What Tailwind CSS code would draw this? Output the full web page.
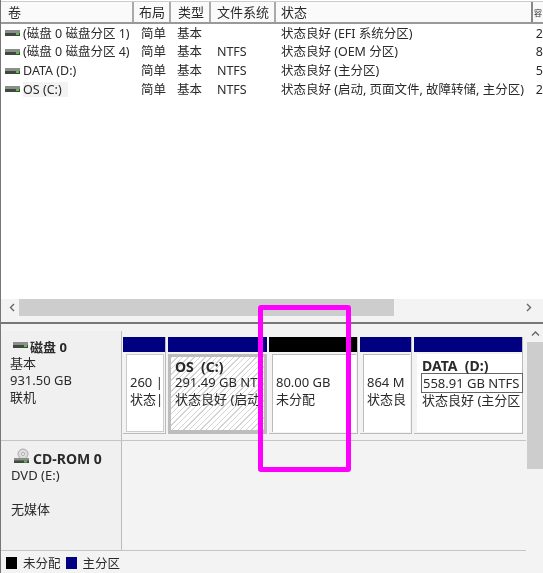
<!doctype html>
<html lang="zh-CN">
<head>
  <meta charset="UTF-8" />
  <title>磁盘管理</title>
  <script src="https://cdn.jsdelivr.net/npm/@tailwindcss/browser@4"></script>
</head>
<body class="bg-white">
<div class="relative w-[543px] h-[573px] overflow-hidden flex flex-col bg-white text-[13px] leading-[15px] text-[#2a2a2a] blur-[0.35px] font-['Noto_Sans','Noto_Sans_CJK_SC',sans-serif]">

  <!-- volume list -->
  <div class="h-[299px] border-l border-[#777] flex flex-col shrink-0">
    <div class="h-[23px] mt-px flex border-b-2 border-[#999] border-t border-t-[#ccc] bg-[#fafafa] shrink-0">
      <div class="w-[133px] pl-[7px] pt-[3px] border-r-2 border-[#aaa]">卷</div>
      <div class="w-[37px] pl-[5px] pt-[3px] border-r-2 border-[#aaa]">布局</div>
      <div class="w-[40px] pl-[7px] pt-[3px] border-r-2 border-[#aaa]">类型</div>
      <div class="w-[65px] pl-[6px] pt-[3px] border-r-2 border-[#aaa]">文件系统</div>
      <div class="w-[257px] pl-[5px] pt-[3px] border-r-2 border-[#888]">状态</div>
      <div class="w-[8px] pl-[1px] pt-[3px] text-[8px]">容</div>
    </div>
    <div class="text-[12.5px]">
      <div class="h-[18.67px] flex items-center">
        <div class="w-[133px] pl-[4px] flex items-center gap-[3px]"><svg width="15" height="6" viewBox="0 0 15 6"><rect width="15" height="6" fill="#8a8f8a"/><rect y="3" width="15" height="3" fill="#3d4a3d"/><rect x="11" y="3" width="3" height="2" fill="#5fbf4a"/></svg><span>(磁盘 0 磁盘分区 1)</span></div>
        <div class="w-[37px] pl-[7px]">简单</div><div class="w-[40px] pl-[6px]">基本</div><div class="w-[65px] pl-[6px]"></div>
        <div class="w-[257px] pl-[5px] whitespace-nowrap">状态良好 (EFI 系统分区)</div><div class="pl-[3px]">2</div>
      </div>
      <div class="h-[18.67px] flex items-center">
        <div class="w-[133px] pl-[4px] flex items-center gap-[3px]"><svg width="15" height="6" viewBox="0 0 15 6"><rect width="15" height="6" fill="#8a8f8a"/><rect y="3" width="15" height="3" fill="#3d4a3d"/><rect x="11" y="3" width="3" height="2" fill="#5fbf4a"/></svg><span>(磁盘 0 磁盘分区 4)</span></div>
        <div class="w-[37px] pl-[7px]">简单</div><div class="w-[40px] pl-[6px]">基本</div><div class="w-[65px] pl-[6px]">NTFS</div>
        <div class="w-[257px] pl-[5px] whitespace-nowrap">状态良好 (OEM 分区)</div><div class="pl-[3px]">8</div>
      </div>
      <div class="h-[18.67px] flex items-center">
        <div class="w-[133px] pl-[4px] flex items-center gap-[3px]"><svg width="15" height="6" viewBox="0 0 15 6"><rect width="15" height="6" fill="#8a8f8a"/><rect y="3" width="15" height="3" fill="#3d4a3d"/><rect x="11" y="3" width="3" height="2" fill="#5fbf4a"/></svg><span>DATA (D:)</span></div>
        <div class="w-[37px] pl-[7px]">简单</div><div class="w-[40px] pl-[6px]">基本</div><div class="w-[65px] pl-[6px]">NTFS</div>
        <div class="w-[257px] pl-[5px] whitespace-nowrap">状态良好 (主分区)</div><div class="pl-[3px]">5</div>
      </div>
      <div class="h-[18.67px] flex items-center">
        <div class="w-[133px] pl-[4px] flex items-center gap-[3px]"><svg width="15" height="6" viewBox="0 0 15 6"><rect width="15" height="6" fill="#8a8f8a"/><rect y="3" width="15" height="3" fill="#3d4a3d"/><rect x="11" y="3" width="3" height="2" fill="#5fbf4a"/></svg><span class="bg-[#f3f3f3] pr-[6px]">OS (C:)</span></div>
        <div class="w-[37px] pl-[7px]">简单</div><div class="w-[40px] pl-[6px]">基本</div><div class="w-[65px] pl-[6px]">NTFS</div>
        <div class="w-[257px] pl-[5px] whitespace-nowrap">状态良好 (启动, 页面文件, 故障转储, 主分区)</div><div class="pl-[3px]">2</div>
      </div>
    </div>
  </div>

  <!-- horizontal scrollbar -->
  <div class="h-[25px] shrink-0 border-l border-[#777] bg-[#f3f3f3] border-b-2 border-b-[#777]">
    <div class="h-[17px] flex items-center">
      <svg class="ml-[5px] w-[13px] shrink-0" width="7" height="9" viewBox="0 0 7 9"><path d="M5 1 1.5 4.5 5 8" fill="none" stroke="#666" stroke-width="1.4"/></svg>
      <div class="w-[375px] h-[17px] bg-[#cdcdcd]"></div>
      <svg class="ml-[131px]" width="7" height="9" viewBox="0 0 7 9"><path d="M2 1 5.5 4.5 2 8" fill="none" stroke="#666" stroke-width="1.4"/></svg>
    </div>
  </div>

  <!-- disk area -->
  <div class="flex-1 flex bg-[#f3f3f3] border-l border-[#777] min-h-0">
    <div class="w-[525px] shrink-0 flex flex-col pt-[7px]">

      <!-- disk 0 -->
      <div class="h-[110px] flex shrink-0 border-b border-[#c4c4c4]">
        <div class="w-[121px] shrink-0 bg-[#f0f0f0] border-r border-[#bbb] pl-[9px] pt-[8px]">
          <div class="flex items-center h-[16px] ml-[3px]">
            <svg class="-mt-[4px] mr-[2px]" width="15" height="6" viewBox="0 0 15 6"><rect width="15" height="6" fill="#8a8f8a"/><rect y="3" width="15" height="3" fill="#3d4a3d"/><rect x="11" y="3" width="3" height="2" fill="#5fbf4a"/></svg>
            <span class="font-bold">磁盘 0</span>
          </div>
          <div class="leading-[17px]">基本<br />931.50 GB<br />联机</div>
        </div>
        <div class="flex-1 flex pl-[1px] pt-[6px] gap-[2px] items-start">
          <div class="w-[43px] h-[97px] border-r border-b border-[#bbb] flex flex-col">
            <div class="h-[15px] bg-[#000080] shrink-0"></div>
            <div class="mt-[2px] ml-[3px] mr-[1px] h-[78px] bg-white border border-[#ccc] pl-[3px] pt-[19px] leading-[17px] whitespace-nowrap">260 |<br />状态|</div>
          </div>
          <div class="w-[99px] h-[97px] border-b border-[#bbb] flex flex-col">
            <div class="h-[15px] bg-[#000080] shrink-0"></div>
            <div class="mt-[2px] h-[80px] bg-[repeating-linear-gradient(135deg,#d4d4d4_0,#d4d4d4_1px,#fff_1px,#fff_4px)] border-[3px] border-[#bdbdbd] pl-[4px] pt-[2px] leading-[17px] whitespace-nowrap"><b class="block text-[14px] h-[15px] leading-[15px]">OS&nbsp; (C:)</b>291.49 GB NT<br />状态良好 (启动</div>
          </div>
          <div class="w-[89px] h-[97px] border-b border-r border-[#bbb] flex flex-col">
            <div class="h-[15px] bg-black shrink-0"></div>
            <div class="mt-[2px] ml-[3px] mr-[1px] h-[78px] bg-white border-l border-t border-[#bbb] pl-[3px] pt-[19px] leading-[17px] whitespace-nowrap">80.00 GB<br />未分配</div>
          </div>
          <div class="w-[52px] h-[97px] border-b border-r border-[#bbb] flex flex-col">
            <div class="h-[15px] bg-[#000080] shrink-0"></div>
            <div class="mt-[2px] ml-[3px] mr-[1px] h-[78px] bg-white border-l border-t border-[#bbb] pl-[3px] pt-[19px] leading-[17px] whitespace-nowrap">864 M<br />状态良</div>
          </div>
          <div class="w-[109px] h-[97px] border-b border-r border-[#bbb] flex flex-col">
            <div class="h-[15px] bg-[#000080] shrink-0"></div>
            <div class="mt-[2px] ml-[3px] h-[78px] bg-white pl-[5px] pt-[5px] whitespace-nowrap">
              <b class="block text-[14px] h-[14px] leading-[14px]">DATA&nbsp; (D:)</b>
              <span class="block -ml-[1px] border border-[#666] h-[20px] w-[102px] leading-[18px] pl-px">558.91 GB NTFS</span>
              <span class="block">状态良好 (主分区</span>
            </div>
          </div>
        </div>
      </div>

      <!-- cd-rom -->
      <div class="h-[110px] flex shrink-0 border-b border-[#c4c4c4]">
        <div class="w-[121px] shrink-0 bg-[#f0f0f0] border-r border-[#bbb] pl-[10px] pt-[9px]">
          <div class="flex items-center h-[16px] ml-[3px]">
            <svg class="-mt-[5px] mr-[4px]" width="15" height="16" viewBox="0 0 15 16"><circle cx="9" cy="6" r="5" fill="#ddd" stroke="#aaa"/><circle cx="9" cy="6" r="1.5" fill="#fff" stroke="#aaa"/><rect y="10" width="15" height="5" fill="#8a8f8a"/><rect y="12.5" width="15" height="2.5" fill="#3d4a3d"/><rect x="10" y="12.5" width="3" height="2" fill="#5fbf4a"/></svg>
            <span class="font-bold text-[14px]">CD-ROM 0</span>
          </div>
          <div class="mt-px leading-[17px]">DVD (E:)<br /><br />无媒体</div>
        </div>
        <div class="flex-1"></div>
      </div>

      <!-- legend -->
      <div class="flex items-center h-[22px] pl-[5px] pt-[2px] text-[12.5px]">
        <span class="w-[11px] h-[12px] bg-black mr-[6px]"></span><span class="mr-[5px]">未分配</span>
        <span class="w-[11px] h-[12px] bg-[#000080] mr-[6px]"></span><span>主分区</span>
      </div>
    </div>

    <!-- vertical scrollbar -->
    <div class="flex-1 pt-[6px] pl-[1px]">
      <svg class="ml-[4px]" width="9" height="7" viewBox="0 0 9 7"><path d="M1 5.5 4.5 2 8 5.5" fill="none" stroke="#666" stroke-width="1.4"/></svg>
      <div class="mt-[5px] h-[127px] bg-[#cdcdcd]"></div>
    </div>
  </div>

  <!-- highlight drawn over the screenshot -->
  <div class="absolute left-[258px] top-[305px] w-[93px] h-[167px] border-[5px] border-[#ff00ff] rounded-[3px]"></div>
</div>
</body>
</html>
